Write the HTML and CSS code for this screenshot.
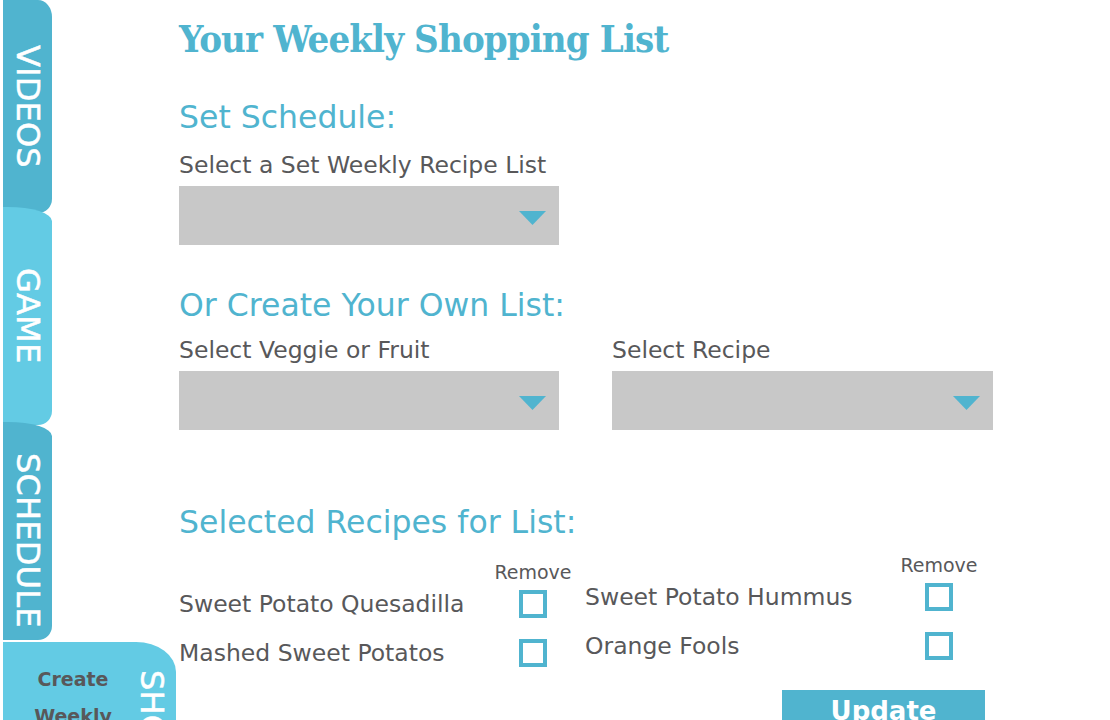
FILE: index.html
```html
<!DOCTYPE html>
<html lang="en">
<head>
<meta charset="utf-8">
<title>Your Weekly Shopping List</title>
<link rel="stylesheet" href="styles.css">
</head>
<body>
<div class="page">
  <nav class="sidebar">
    <div class="tab tab-dark tab-first"><span class="tab-label">VIDEOS</span></div>
    <div class="tab tab-light tab-game"><span class="tab-label">GAME</span></div>
    <div class="tab tab-dark tab-schedule"><span class="tab-label">SCHEDULE</span></div>
    <div class="tab tab-active">
      <div class="tab-sub">Create Weekly Shopping List</div>
      <span class="tab-label tab-label-active">SHOPPING</span>
    </div>
  </nav>
  <main class="main">
    <h1 class="title">Your Weekly Shopping List</h1>
    <h2 class="section section-set">Set Schedule:</h2>
    <div class="label label-set">Select a Set Weekly Recipe List</div>
    <div class="select select-set">
      <svg class="arrow" width="27" height="14" viewBox="0 0 27 14"><polygon points="0,0 27,0 13.5,14"/></svg>
    </div>
    <h2 class="section section-own">Or Create Your Own List:</h2>
    <div class="fields">
      <div class="field">
        <div class="label">Select Veggie or Fruit</div>
        <div class="select">
          <svg class="arrow" width="27" height="14" viewBox="0 0 27 14"><polygon points="0,0 27,0 13.5,14"/></svg>
        </div>
      </div>
      <div class="field">
        <div class="label">Select Recipe</div>
        <div class="select">
          <svg class="arrow" width="27" height="14" viewBox="0 0 27 14"><polygon points="0,0 27,0 13.5,14"/></svg>
        </div>
      </div>
    </div>
    <h2 class="section section-selected">Selected Recipes for List:</h2>
    <div class="recipes">
      <div class="recipe-col recipe-col-left">
        <div class="remove-head">Remove</div>
        <div class="recipe-row">
          <span class="recipe-name">Sweet Potato Quesadilla</span>
          <span class="check"></span>
        </div>
        <div class="recipe-row">
          <span class="recipe-name">Mashed Sweet Potatos</span>
          <span class="check"></span>
        </div>
      </div>
      <div class="recipe-col">
        <div class="remove-head">Remove</div>
        <div class="recipe-row">
          <span class="recipe-name">Sweet Potato Hummus</span>
          <span class="check"></span>
        </div>
        <div class="recipe-row">
          <span class="recipe-name">Orange Fools</span>
          <span class="check"></span>
        </div>
      </div>
    </div>
    <div class="actions">
      <button class="update" type="button">Update</button>
    </div>
  </main>
</div>
</body>
</html>
```
FILE: styles.css
```css
html, body {
  margin: 0;
  padding: 0;
  background: #ffffff;
  overflow: hidden;
}

body {
  font-family: "DejaVu Sans", "Liberation Sans", sans-serif;
  color: #58585a;
}

.page {
  display: flex;
  height: 720px;
  overflow: hidden;
}

/* ---------- sidebar tabs ---------- */
.sidebar {
  flex: 0 0 auto;
  width: 173px;
  padding-left: 3px;
  display: flex;
  flex-direction: column;
  align-items: flex-start;
}

.tab {
  width: 49px;
  display: flex;
  align-items: center;
  justify-content: center;
  border-radius: 0 14px 14px 0;
  flex: 0 0 auto;
}

.tab-dark { background: #50b4cf; }
.tab-light { background: #63cbe4; }

.tab-first {
  height: 213px;
  border-top-right-radius: 14px 17px;
}

.tab-game {
  height: 218px;
  margin-top: -6px;
  border-top-right-radius: 44px 14px;
}

.tab-schedule {
  height: 218px;
  margin-top: -3px;
  padding-top: 18px;
  box-sizing: border-box;
  border-top-right-radius: 44px 14px;
}

.tab-label {
  writing-mode: vertical-rl;
  color: #ffffff;
  font-size: 32px;
  line-height: 37px;
  letter-spacing: 0.2px;
  -webkit-text-stroke: 0.5px #ffffff;
}

.tab-active {
  width: 165px;
  height: 140px;
  margin-top: 2px;
  padding-left: 8px;
  background: #63cbe4;
  border-radius: 0 40px 0 0 / 0 30px 0 0;
  align-items: flex-start;
  justify-content: flex-start;
}

.tab-sub {
  width: 124px;
  padding-top: 19px;
  text-align: center;
  font-weight: bold;
  font-size: 19px;
  line-height: 37px;
  color: #58585a;
}

.tab-label-active {
  line-height: 33px;
  margin-top: 28px;
}

/* ---------- main ---------- */
.main {
  flex: 1 1 auto;
  margin-left: 3px;
  padding-top: 19px;
}

.title {
  margin: 0;
  font-family: "DejaVu Serif Condensed", "DejaVu Serif", serif;
  font-weight: bold;
  font-size: 38px;
  line-height: 40px;
  color: #50b4cf;
  letter-spacing: -0.9px;
}

.section {
  margin: 0;
  font-weight: normal;
  font-size: 31.5px;
  line-height: 36px;
  color: #50b4cf;
}

.section-set { margin-top: 40px; }
.section-own { margin-top: 42px; }
.section-selected { margin-top: 74px; }

.label {
  font-size: 23.5px;
  line-height: 26px;
  color: #58585a;
}

.label-set { margin-top: 17px; }

.select {
  width: 380px;
  height: 59px;
  margin-top: 8px;
  background: #c8c8c8;
  box-sizing: border-box;
  padding: 25px 13px 0 0;
  display: flex;
  justify-content: flex-end;
  align-items: flex-start;
}

.arrow { display: block; fill: #50b4cf; }

.fields {
  margin-top: 14px;
  display: grid;
  grid-template-columns: 380px 381px;
  column-gap: 53px;
}

.fields .select { width: auto; }

/* ---------- selected recipes ---------- */
.recipes {
  margin-top: 14px;
  display: flex;
  gap: 12px;
  align-items: flex-start;
}

.recipe-col {
  width: 394px;
  display: flex;
  flex-direction: column;
}

.recipe-col-left { padding-top: 7px; }

.remove-head {
  align-self: flex-end;
  width: 80px;
  text-align: center;
  font-size: 19px;
  line-height: 22px;
  margin-bottom: 7px;
  color: #58585a;
}

.recipe-row {
  display: flex;
  align-items: center;
  height: 28px;
}

.recipe-row + .recipe-row { margin-top: 21px; }

.recipe-name {
  flex: 1 1 auto;
  font-size: 23.5px;
  line-height: 28px;
  color: #58585a;
}

.check {
  flex: 0 0 auto;
  width: 28px;
  height: 28px;
  box-sizing: border-box;
  border: 4px solid #50b4cf;
  margin-right: 26px;
}

.actions {
  margin-top: 23px;
  padding-left: 603px;
}

.update {
  width: 203px;
  height: 42px;
  border: 0;
  padding: 0;
  background: #50b4cf;
  color: #ffffff;
  font-family: "DejaVu Sans", sans-serif;
  font-weight: bold;
  font-size: 26px;
  line-height: 40px;
}
```
